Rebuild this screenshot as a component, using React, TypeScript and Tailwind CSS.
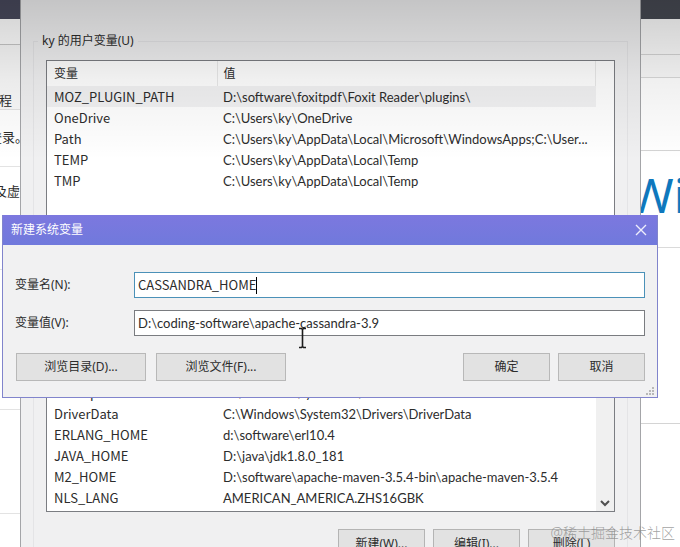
import React from "react";

type Variable = { name: string; value: string };

const userVariables: Variable[] = [
  { name: "MOZ_PLUGIN_PATH", value: "D:\\software\\foxitpdf\\Foxit Reader\\plugins\\" },
  { name: "OneDrive", value: "C:\\Users\\ky\\OneDrive" },
  { name: "Path", value: "C:\\Users\\ky\\AppData\\Local\\Microsoft\\WindowsApps;C:\\User..." },
  { name: "TEMP", value: "C:\\Users\\ky\\AppData\\Local\\Temp" },
  { name: "TMP", value: "C:\\Users\\ky\\AppData\\Local\\Temp" },
];

const systemVariables: Variable[] = [
  { name: "ComSpec", value: "C:\\Windows\\system32\\cmd.exe" },
  { name: "DriverData", value: "C:\\Windows\\System32\\Drivers\\DriverData" },
  { name: "ERLANG_HOME", value: "d:\\software\\erl10.4" },
  { name: "JAVA_HOME", value: "D:\\java\\jdk1.8.0_181" },
  { name: "M2_HOME", value: "D:\\software\\apache-maven-3.5.4-bin\\apache-maven-3.5.4" },
  { name: "NLS_LANG", value: "AMERICAN_AMERICA.ZHS16GBK" },
];

function VariableTable({ rows, selected }: { rows: Variable[]; selected?: number }) {
  return (
    <table className="w-full table-fixed text-left">
      <colgroup>
        <col className="w-[170px]" />
        <col />
      </colgroup>
      <thead>
        <tr className="h-[25px]">
          <th className="border-r border-[#e9e9e9] pl-[7px] font-normal">变量</th>
          <th className="border-r border-[#e9e9e9] pl-[6px] font-normal">值</th>
        </tr>
      </thead>
      <tbody className="text-[13px]">
        {rows.map((row, i) => (
          <tr key={row.name} className={i === selected ? "h-[21px] bg-[#f2f2f3]" : "h-[21px]"}>
            <td className="pl-[7px] font-['Noto_Sans_CJK_SC',sans-serif] leading-5 whitespace-nowrap">{row.name}</td>
            <td className="pl-[6px] font-['Lato',sans-serif] leading-5 whitespace-nowrap">{row.value}</td>
          </tr>
        ))}
      </tbody>
    </table>
  );
}

function LeftPage() {
  return (
    <div className="flex w-5 shrink-0 flex-col items-end overflow-hidden bg-white text-[13px] whitespace-nowrap">
      <div className="h-[19px] w-full shrink-0 bg-[#48495c]" />
      <div className="h-[26px] w-full shrink-0 border-b border-[#c8c8c8]" />
      <div className="flex h-[65px] w-full shrink-0 items-end justify-end border-b border-[#e3e3e3] bg-[#fafafa] pr-2">
        <span>远程</span>
      </div>
      <div className="flex h-[57px] w-full shrink-0 items-center justify-end border-b border-[#e3e3e3]">
        <span className="-mr-2">登录。</span>
      </div>
      <div className="flex h-[103px] w-full shrink-0 justify-end border-b border-[#e3e3e3] pt-4">
        <span>及虚</span>
      </div>
      <div className="h-[140px] w-full shrink-0 border-b border-[#e3e3e3]" />
      <div className="h-[104px] w-full shrink-0 border-b border-[#e3e3e3]" />
    </div>
  );
}

function RightPage() {
  return (
    <div className="flex w-[39px] shrink-0 flex-col overflow-hidden bg-white">
      <div className="h-[19px] shrink-0 bg-[#464952]" />
      <div className="h-9 shrink-0 border-b border-[#d4d4d4] bg-[#fafafa]" />
      <div className="h-[23px] shrink-0 border-b border-[#dadada] bg-[#fafafa]" />
      <div className="h-[73px] shrink-0 border-b border-[#d4d4d4]" />
      <div className="flex h-[97px] shrink-0 items-start border-b border-[#dadada] pt-3">
        <span className="-ml-3 text-5xl leading-[64px] text-[#0f78bd]">Windows</span>
      </div>
      <div className="h-44 shrink-0 border-b border-[#d4d4d4]" />
    </div>
  );
}

function SmallButton({ children }: { children: React.ReactNode }) {
  return (
    <button type="button" className="h-[29px] w-[87px] border border-[#b4b4b4] bg-[#e2e2e2]">
      {children}
    </button>
  );
}

function EnvironmentWindow() {
  return (
    <main className="min-w-0 flex-1 overflow-hidden border-x border-[#a4a5a8] bg-[#f0f0f1] px-3 pt-[33px]">
      <fieldset className="border border-[#e4e4e6] px-3 pb-3">
        <legend className="-ml-2 px-1 leading-4">ky 的用户变量(U)</legend>
        <div className="mt-[11px] h-[200px] border border-[#7b7d82] bg-white pr-[18px]">
          <VariableTable rows={userVariables} selected={0} />
        </div>
      </fieldset>
      <fieldset className="mt-[49px] border border-[#e4e4e6] px-3 pb-3">
        <legend className="-ml-2 px-1 leading-4">系统变量(S)</legend>
        <div className="mt-[18px] flex border border-[#7b7d82] bg-white">
          <div className="min-w-0 flex-1 pb-[3px]">
            <VariableTable rows={systemVariables} />
          </div>
          <div className="flex w-[18px] items-end justify-center bg-[#f0f0f0] pb-1">
            <svg width="10" height="8" viewBox="0 0 10 8" fill="none" stroke="#505050" strokeWidth="2">
              <path d="M1 2l4 4 4-4" />
            </svg>
          </div>
        </div>
        <div className="mt-[17px] flex justify-end gap-2">
          <SmallButton>新建(W)...</SmallButton>
          <SmallButton>编辑(I)...</SmallButton>
          <SmallButton>删除(L)</SmallButton>
        </div>
      </fieldset>
    </main>
  );
}

function DialogButton({ children, wide }: { children: React.ReactNode; wide?: boolean }) {
  return (
    <button
      type="button"
      className={
        wide
          ? "h-7 w-[130px] border border-[#b8b8b8] bg-[#e2e2e2]"
          : "h-7 w-[87px] border border-[#b8b8b8] bg-[#e2e2e2]"
      }
    >
      {children}
    </button>
  );
}

function NewVariableDialog() {
  return (
    <form
      role="dialog"
      aria-labelledby="dialog-title"
      className="absolute top-[215px] right-[22px] left-0.5 border border-t-0 border-[#8184cc] bg-[#f1f1f2]"
    >
      <header className="flex h-[30px] items-center justify-between bg-linear-to-b from-[#7c78df] to-[#7079dc] pr-[10px] pl-2 text-white">
        <h1 id="dialog-title">新建系统变量</h1>
        <button type="button" aria-label="关闭">
          <svg width="12" height="12" viewBox="0 0 12 12" stroke="#eeeefc" strokeWidth="1.4">
            <path d="M1 1l10 10M11 1L1 11" />
          </svg>
        </button>
      </header>
      <div className="px-3 pt-[27px] pb-4">
        <div className="flex items-center">
          <label htmlFor="variable-name" className="w-[119px]">变量名(N):</label>
          <div className="flex h-[26px] flex-1 items-center border border-[#4b91b8] bg-white px-[3px]">
            <input
              id="variable-name"
              defaultValue="CASSANDRA_HOME"
              className="field-sizing-content font-['Noto_Sans_CJK_SC',sans-serif] text-[13px] outline-none"
            />
            <span className="h-[17px] w-px bg-black" />
          </div>
        </div>
        <div className="mt-3 flex items-center">
          <label htmlFor="variable-value" className="w-[119px]">变量值(V):</label>
          <input
            id="variable-value"
            defaultValue={"D:\\coding-software\\apache-cassandra-3.9"}
            className="h-[26px] min-w-0 flex-1 border border-[#7a7c80] bg-white px-[3px] font-['Lato',sans-serif] text-[13px] outline-none"
          />
        </div>
        <div className="mt-[17px] flex justify-between">
          <div className="flex gap-[10px] pl-px">
            <DialogButton wide>浏览目录(D)...</DialogButton>
            <DialogButton wide>浏览文件(F)...</DialogButton>
          </div>
          <div className="flex gap-2">
            <DialogButton>确定</DialogButton>
            <DialogButton>取消</DialogButton>
          </div>
        </div>
      </div>
      <svg className="absolute right-[3px] bottom-0.5" width="8" height="8" fill="#b8b8b8">
        <path d="M6 0h2v2H6zM3 3h2v2H3zM6 3h2v2H6zM0 6h2v2H0zM3 6h2v2H3zM6 6h2v2H6z" />
      </svg>
    </form>
  );
}

export default function App() {
  return (
    <div className="relative flex h-screen overflow-hidden font-['Noto_Sans','Noto_Sans_CJK_SC',sans-serif] text-xs text-[#2c2c2c]">
      <LeftPage />
      <EnvironmentWindow />
      <RightPage />
      <div className="pointer-events-none absolute inset-x-0 top-0 h-40 bg-linear-to-b from-black/18 via-black/6 to-transparent" />
      <NewVariableDialog />
      <svg
        className="pointer-events-none absolute top-[327px] left-[298px]"
        width="9"
        height="22"
        viewBox="0 0 9 22"
        fill="none"
        stroke="#1c1c1c"
        strokeWidth="1.6"
      >
        <path d="M1 1.5h2.5l1 1 1-1H8M4.500 2v18M1 20.500h2.500l1-1 1 1H8" />
      </svg>
      <p className="pointer-events-none absolute right-[5px] bottom-0.5 text-[14px] leading-6 font-light text-[#8b8b8b]/80">
        @稀土掘金技术社区
      </p>
    </div>
  );
}
